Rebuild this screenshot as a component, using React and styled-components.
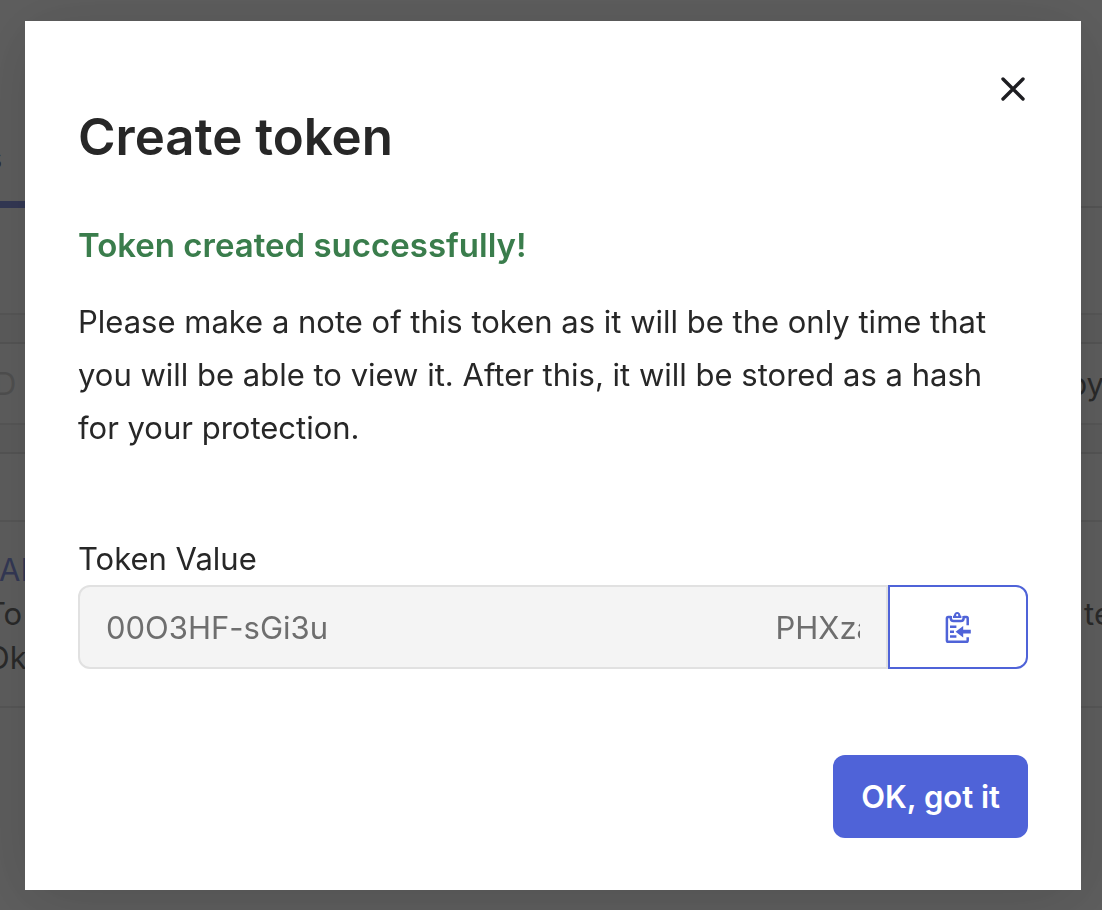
import React from "react";
import styled, { createGlobalStyle } from "styled-components";

const TOKEN = "00O3HF-sGi3u" + " ".repeat(51) + "\u200a" + "PHXza";

function CloseIcon() {
    return (
        <svg width="24" height="24" viewBox="0 0 24 24" fill="none" aria-hidden="true">
            <path d="M2 2 L22 22 M22 2 L2 22" stroke="#1d1d21" strokeWidth="3.4" strokeLinecap="round" />
        </svg>
    );
}

function ClipboardIcon() {
    return (
        <svg width="26" height="32" viewBox="0 -1 26 32" fill="none" aria-hidden="true">
            <g stroke="#4f63d8" strokeWidth="2.5">
                <path d="M6 5 H3.2 Q1.9 5 1.9 6.3 V28.4 Q1.9 29.7 3.2 29.7 H21.4 Q22.7 29.7 22.7 28.4 V25.2" />
                <path d="M18.6 5 H21.4 Q22.7 5 22.7 6.3 V13.2" />
                <path d="M5.8 3.9 V6.2 Q5.8 9 8.6 9 H15.8 Q18.6 9 18.6 6.2 V3.9" />
                <path d="M5 14.7 H11.4 M5 19.7 H9 M5 24.4 H11.4" />
            </g>
            <path
                d="M8 6 V4.2 Q8 3.6 8.9 3.6 Q9.4 0 12.2 0 Q15 0 15.5 3.6 Q16.4 3.6 16.4 4.2 V6 Z M12.2 2.1 A1.1 1.1 0 1 0 12.2 4.3 A1.1 1.1 0 1 0 12.2 2.1 Z"
                fill="#4f63d8"
                fillRule="evenodd"
            />
            <path d="M10.6 19.7 L18.2 13.9 V17.8 H25.8 V21.6 H18.2 V25.5 Z" fill="#4f63d8" />
        </svg>
    );
}

function App() {
    return (
        <>
            <GlobalStyle />
            <Page aria-hidden="true">
                <Tabs>
                    <Tab>s</Tab>
                </Tabs>
                <Spacer />
                <Band />
                <Filters>
                    <Faded>D</Faded>
                    <span>by</span>
                </Filters>
                <Band />
                <TableHead />
                <Row>
                    <Cell>
                        <Accent>AM</Accent>
                        <span>To</span>
                        <span>Ok</span>
                    </Cell>
                    <span>te</span>
                </Row>
            </Page>
            <Overlay>
                <Modal role="dialog" aria-modal="true" aria-labelledby="modal-title">
                    <CloseButton type="button" aria-label="Close">
                        <CloseIcon />
                    </CloseButton>
                    <Title id="modal-title">Create token</Title>
                    <Success>Token created successfully!</Success>
                    <Message>
                        Please make a note of this token as it will be the only time that you will be able to view
                        it. After this, it will be stored as a hash for your protection.
                    </Message>
                    <Label htmlFor="token-value">Token Value</Label>
                    <Field>
                        <TokenInput id="token-value" type="text" value={TOKEN} readOnly />
                        <CopyButton type="button" aria-label="Copy to clipboard">
                            <ClipboardIcon />
                        </CopyButton>
                    </Field>
                    <Footer>
                        <PrimaryButton type="button">OK, got it</PrimaryButton>
                    </Footer>
                </Modal>
            </Overlay>
        </>
    );
}

const GlobalStyle = createGlobalStyle`
    *{
        box-sizing: border-box;
    }
    body{
        margin: 0;
        overflow: hidden;
        background-color: #ffffff;
        color: #272727;
        font-family: Inter, "Liberation Sans", sans-serif;
        font-size: 31px;
    }
    h1, h2, p{
        margin: 0;
    }
`;

const Page = styled.div`
    height: 100vh;
    overflow: hidden;
`;

const Tabs = styled.div`
    height: 208px;
    display: flex;
    align-items: flex-end;
    border-bottom: 2px solid #d8d8d8;
`;

const Tab = styled.div`
    width: 64px;
    height: 80px;
    margin: 0 0 -2px -14px;
    line-height: 60px;
    border-bottom: 7px solid #4f63d8;
`;

const Spacer = styled.div`
    height: 105px;
`;

const Band = styled.div`
    height: 31px;
    background-color: #f4f4f4;
    border-top: 2px solid #e1e1e1;
    border-bottom: 2px solid #d8d8d8;
`;

const Filters = styled.div`
    height: 79px;
    margin: 0 -2px 0 -6px;
    display: flex;
    justify-content: space-between;
    align-items: center;
`;

const Faded = styled.span`
    color: #c4c4c4;
`;

const TableHead = styled.div`
    height: 68px;
    border-bottom: 2px solid #e1e1e1;
`;

const Row = styled.div`
    height: 186px;
    margin: 0 -10px 0 -14px;
    display: flex;
    justify-content: space-between;
    align-items: center;
    line-height: 44px;
    border-bottom: 2px solid #e1e1e1;
`;

const Cell = styled.div`
    display: flex;
    flex-direction: column;
`;

const Accent = styled.span`
    padding-left: 13px;
    color: #4f63d8;
`;

const Overlay = styled.div`
    position: fixed;
    inset: 0;
    padding: 21px 21px 20px 25px;
    background-color: rgba(43, 43, 43, 0.76);
`;

const Modal = styled.section`
    min-height: 100%;
    padding: 52px 53px;
    display: flex;
    flex-direction: column;
    background-color: #ffffff;
    box-shadow: 0 8px 64px rgba(0, 0, 0, 0.15);
`;

const CloseButton = styled.button`
    width: 30px;
    height: 32px;
    padding: 0;
    display: flex;
    align-items: center;
    justify-content: center;
    align-self: flex-end;
    background: none;
    border: none;
    cursor: pointer;
`;

const Title = styled.h1`
    font-size: 51px;
    line-height: 64px;
    font-weight: 600;
`;

const Success = styled.h2`
    margin-top: 52px;
    font-size: 33px;
    line-height: 48px;
    font-weight: 600;
    color: #3a7d4c;
`;

const Message = styled.p`
    margin-top: 26px;
    line-height: 53px;
`;

const Label = styled.label`
    margin-top: 83px;
    line-height: 44px;
`;

const Field = styled.div`
    height: 84px;
    margin-top: 4px;
    display: flex;
`;

const TokenInput = styled.input`
    flex: 1;
    min-width: 0;
    padding: 0 26px;
    background-color: #f4f4f4;
    color: #6e6e6e;
    font: inherit;
    border: 2px solid #e1e1e1;
    border-radius: 12px 0 0 12px;
    outline: none;
`;

const CopyButton = styled.button`
    width: 140px;
    padding: 0;
    display: flex;
    align-items: center;
    justify-content: center;
    background-color: #ffffff;
    border: 2px solid #4f63d8;
    border-radius: 0 12px 12px 0;
    cursor: pointer;
`;

const Footer = styled.footer`
    margin-top: 86px;
    display: flex;
    justify-content: flex-end;
`;

const PrimaryButton = styled.button`
    height: 83px;
    padding: 0 28px;
    background-color: #4f63d8;
    color: #ffffff;
    font: inherit;
    font-weight: 600;
    border: none;
    border-radius: 12px;
    cursor: pointer;
`;

export default App;
